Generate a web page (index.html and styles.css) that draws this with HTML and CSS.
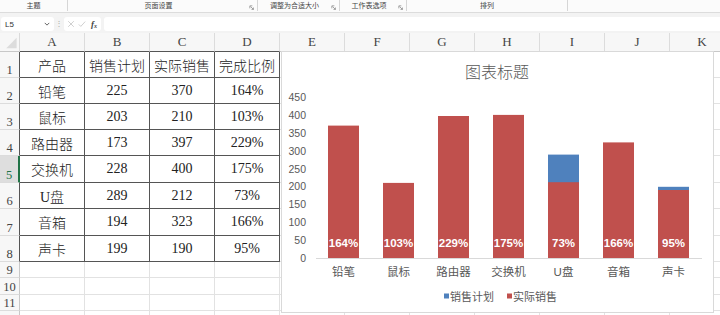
FILE: index.html
```html
<!DOCTYPE html>
<html lang="zh">
<head>
<meta charset="utf-8">
<title>Excel</title>
<link rel="stylesheet" href="styles.css">
</head>
<body>
<div class="app">
  <div class="ribbon">
    <div class="grp g1"><span class="lbl">主题</span></div>
    <div class="grp g2"><span class="lbl">页面设置</span><svg class="launch" viewBox="0 0 6 6"><path d="M1 4V1h3M2 2l3.3 3.3M5.3 3v2.3H3"/></svg></div>
    <div class="grp g3"><span class="lbl">调整为合适大小</span><svg class="launch" viewBox="0 0 6 6"><path d="M1 4V1h3M2 2l3.3 3.3M5.3 3v2.3H3"/></svg></div>
    <div class="grp g4"><span class="lbl">工作表选项</span><svg class="launch" viewBox="0 0 6 6"><path d="M1 4V1h3M2 2l3.3 3.3M5.3 3v2.3H3"/></svg></div>
    <div class="grp g5"><span class="lbl">排列</span></div>
    <div class="grp g6"></div>
  </div>
  <div class="fbar">
    <div class="namebox"><span>L5</span><svg class="chev" viewBox="0 0 8 5"><path d="M1 1l3 3 3-3"/></svg></div>
    <div class="dots">⋮</div>
    <div class="fxbox">
      <svg class="ico" viewBox="0 0 10 10"><path d="M1.5 1.5l7 7M8.5 1.5l-7 7"/></svg>
      <svg class="ico" viewBox="0 0 10 10"><path d="M1 5.5l2.5 2.5L9 2"/></svg>
      <span class="fx">f<sub>x</sub></span>
    </div>
    <div class="finput"></div>
  </div>
  <div class="sheet">
    <div class="row hdr">
      <div class="corner"><svg viewBox="0 0 20 19"><path d="M6 16H17V5z"/></svg></div>
      <div class="ch tb">A</div><div class="ch tb">B</div><div class="ch tb">C</div><div class="ch tb">D</div>
      <div class="ch">E</div><div class="ch">F</div><div class="ch">G</div><div class="ch">H</div><div class="ch">I</div><div class="ch">J</div><div class="ch">K</div>
    </div>
    <div class="row r26">
      <div class="rh tb">1</div>
      <div class="c t">产品</div><div class="c t">销售计划</div><div class="c t">实际销售</div><div class="c t">完成比例</div>
      <div class="c"></div><div class="c"></div><div class="c"></div><div class="c"></div><div class="c"></div><div class="c"></div><div class="c"></div>
    </div>
    <div class="row r26">
      <div class="rh tb">2</div>
      <div class="c t">铅笔</div><div class="c t">225</div><div class="c t">370</div><div class="c t">164%</div>
      <div class="c"></div><div class="c"></div><div class="c"></div><div class="c"></div><div class="c"></div><div class="c"></div><div class="c"></div>
    </div>
    <div class="row r26">
      <div class="rh tb">3</div>
      <div class="c t">鼠标</div><div class="c t">203</div><div class="c t">210</div><div class="c t">103%</div>
      <div class="c"></div><div class="c"></div><div class="c"></div><div class="c"></div><div class="c"></div><div class="c"></div><div class="c"></div>
    </div>
    <div class="row r26">
      <div class="rh tb">4</div>
      <div class="c t">路由器</div><div class="c t">173</div><div class="c t">397</div><div class="c t">229%</div>
      <div class="c"></div><div class="c"></div><div class="c"></div><div class="c"></div><div class="c"></div><div class="c"></div><div class="c"></div>
    </div>
    <div class="row r27">
      <div class="rh tb sel">5</div>
      <div class="c t">交换机</div><div class="c t">228</div><div class="c t">400</div><div class="c t">175%</div>
      <div class="c"></div><div class="c"></div><div class="c"></div><div class="c"></div><div class="c"></div><div class="c"></div><div class="c"></div>
    </div>
    <div class="row r26">
      <div class="rh tb">6</div>
      <div class="c t">U盘</div><div class="c t">289</div><div class="c t">212</div><div class="c t">73%</div>
      <div class="c"></div><div class="c"></div><div class="c"></div><div class="c"></div><div class="c"></div><div class="c"></div><div class="c"></div>
    </div>
    <div class="row r27">
      <div class="rh tb">7</div>
      <div class="c t">音箱</div><div class="c t">194</div><div class="c t">323</div><div class="c t">166%</div>
      <div class="c"></div><div class="c"></div><div class="c"></div><div class="c"></div><div class="c"></div><div class="c"></div><div class="c"></div>
    </div>
    <div class="row r26">
      <div class="rh tb">8</div>
      <div class="c t">声卡</div><div class="c t">199</div><div class="c t">190</div><div class="c t">95%</div>
      <div class="c"></div><div class="c"></div><div class="c"></div><div class="c"></div><div class="c"></div><div class="c"></div><div class="c"></div>
    </div>
    <div class="row r16">
      <div class="rh">9</div>
      <div class="c"></div><div class="c"></div><div class="c"></div><div class="c"></div><div class="c"></div><div class="c"></div><div class="c"></div><div class="c"></div><div class="c"></div><div class="c"></div><div class="c"></div>
    </div>
    <div class="row r17">
      <div class="rh">10</div>
      <div class="c"></div><div class="c"></div><div class="c"></div><div class="c"></div><div class="c"></div><div class="c"></div><div class="c"></div><div class="c"></div><div class="c"></div><div class="c"></div><div class="c"></div>
    </div>
    <div class="row r16">
      <div class="rh">11</div>
      <div class="c"></div><div class="c"></div><div class="c"></div><div class="c"></div><div class="c"></div><div class="c"></div><div class="c"></div><div class="c"></div><div class="c"></div><div class="c"></div><div class="c"></div>
    </div>
    <div class="row r16">
      <div class="rh"></div>
      <div class="c"></div><div class="c"></div><div class="c"></div><div class="c"></div><div class="c"></div><div class="c"></div><div class="c"></div><div class="c"></div><div class="c"></div><div class="c"></div><div class="c"></div>
    </div>

    <div class="chart">
      <svg width="433" height="262" viewBox="0 0 433 262">
        <text class="title" x="216" y="21">图表标题</text>
        <g class="ylab">
          <text x="25" y="46">450</text>
          <text x="25" y="64">400</text>
          <text x="25" y="82">350</text>
          <text x="25" y="100">300</text>
          <text x="25" y="118">250</text>
          <text x="25" y="135">200</text>
          <text x="25" y="153">150</text>
          <text x="25" y="171">100</text>
          <text x="25" y="189">50</text>
          <text x="25" y="207">0</text>
        </g>
        <line class="axis" x1="35" y1="207.5" x2="421" y2="207.5"/>
        <g class="plan">
          <rect x="47" y="126.5" width="31" height="80.5"/>
          <rect x="102" y="134.4" width="31" height="72.6"/>
          <rect x="157" y="145.1" width="31" height="61.9"/>
          <rect x="212" y="125.4" width="31" height="81.6"/>
          <rect x="267" y="103.6" width="31" height="103.4"/>
          <rect x="322" y="137.6" width="31" height="69.4"/>
          <rect x="377" y="135.8" width="31" height="71.2"/>
        </g>
        <g class="act">
          <rect x="47" y="74.6" width="31" height="132.4"/>
          <rect x="102" y="131.9" width="31" height="75.1"/>
          <rect x="157" y="65" width="31" height="142"/>
          <rect x="212" y="63.9" width="31" height="143.1"/>
          <rect x="267" y="131.2" width="31" height="75.8"/>
          <rect x="322" y="91.4" width="31" height="115.6"/>
          <rect x="377" y="139" width="31" height="68"/>
        </g>
        <g class="pct">
          <text x="62.5" y="192">164%</text>
          <text x="117.5" y="192">103%</text>
          <text x="172.5" y="192">229%</text>
          <text x="227.5" y="192">175%</text>
          <text x="282.5" y="192">73%</text>
          <text x="337.5" y="192">166%</text>
          <text x="392.5" y="192">95%</text>
        </g>
        <g class="cat">
          <text x="62.5" y="221">铅笔</text>
          <text x="117.5" y="221">鼠标</text>
          <text x="172.5" y="221">路由器</text>
          <text x="227.5" y="221">交换机</text>
          <text x="282.5" y="221">U盘</text>
          <text x="337.5" y="221">音箱</text>
          <text x="392.5" y="221">声卡</text>
        </g>
        <g class="legend">
          <rect class="sw-plan" x="163" y="242.5" width="5" height="5"/>
          <text x="169" y="245.5">销售计划</text>
          <rect class="sw-act" x="226" y="242.5" width="5" height="5"/>
          <text x="232" y="245.5">实际销售</text>
        </g>
      </svg>
    </div>
  </div>
</div>
</body>
</html>
```

FILE: styles.css
```css
* { box-sizing: border-box; }
html, body { margin: 0; padding: 0; }
body {
  width: 720px;
  height: 315px;
  overflow: hidden;
  background: #fff;
  font-family: "Liberation Sans", "Noto Sans CJK SC", sans-serif;
}
.app { width: 720px; height: 315px; overflow: hidden; display: flex; flex-direction: column; }

/* ribbon group labels */
.ribbon {
  height: 13px;
  flex: none;
  display: flex;
  background: #fbfbfb;
  border-bottom: 1px solid #dcdcdc;
}
.grp {
  height: 11px;
  display: flex;
  align-items: center;
  border-right: 1px solid #d6d6d6;
  flex: none;
}
.g1 { width: 68px; }
.g2 { width: 190px; }
.g3 { width: 82px; }
.g4 { width: 67px; }
.g5 { width: 161px; }
.g6 { flex: 1; border-right: none; }
.lbl {
  flex: 1;
  text-align: center;
  font-size: 7px;
  line-height: 11px;
  color: #444;
  font-family: "Noto Sans CJK SC", sans-serif;
}
.launch {
  width: 5px; height: 5px;
  margin-right: 3px;
  margin-top: 3px;
  flex: none;
}
.launch path { fill: none; stroke: #777; stroke-width: 0.8; }

/* formula bar */
.fbar {
  height: 20px;
  flex: none;
  display: flex;
  align-items: center;
  background: #f3f3f3;
  padding: 2px 0 0 1px;
}
.namebox {
  width: 53px; height: 14px;
  background: #fff;
  border-radius: 3px;
  display: flex; align-items: center;
  padding: 0 4px;
  font-size: 8px; color: #333;
}
.namebox span { flex: 1; }
.chev { width: 6px; height: 4px; }
.chev path { fill: none; stroke: #555; stroke-width: 1.2; }
.dots { width: 10px; text-align: center; font-size: 8px; color: #aaa; line-height: 14px; }
.fxbox {
  width: 37px; height: 14px;
  background: #fff;
  border-radius: 3px;
  display: flex; align-items: center;
  gap: 3px;
  padding-left: 3px;
}
.ico { width: 8px; height: 8px; }
.ico path { fill: none; stroke: #c4c4c4; stroke-width: 1; }
.fx { font-family: "Liberation Serif", serif; font-style: italic; font-weight: bold; font-size: 9px; color: #444; margin-left: 2px; }
.fx sub { font-size: 6px; vertical-align: -1px; }
.finput {
  flex: 1; height: 14px;
  margin-left: 3px;
  background: #fff;
  border-radius: 3px 0 0 3px;
}

/* sheet */
.sheet {
  flex: 1;
  position: relative;
  overflow: hidden;
  background: #fff;
  font-family: "Liberation Serif", "Noto Sans CJK SC", serif;
}
.row { display: flex; flex: none; }
.hdr { height: 19px; }
.r26 { height: 26px; }
.r27 { height: 27px; }
.r16 { height: 16px; }
.r17 { height: 17px; }

.corner {
  width: 20px; flex: none;
  background: #f7f7f7;
  border-right: 1px solid #dadada;
  border-bottom: 1px solid #c8c8c8;
}
.corner svg { width: 20px; height: 18px; display: block; }
.corner path { fill: #dcdcdc; }
.ch {
  width: 65px; flex: none;
  background: #f7f7f7;
  border-right: 1px solid #dcdcdc;
  border-bottom: 1px solid #c8c8c8;
  display: flex; align-items: center; justify-content: center;
  font-size: 13px; color: #444;
}
.ch.tb { border-bottom-color: #555; }
.rh {
  width: 20px; flex: none;
  background: #f7f7f7;
  border-right: 1px solid #c8c8c8;
  border-bottom: 1px solid #dcdcdc;
  display: flex; align-items: flex-end; justify-content: center;
  font-size: 12.5px; line-height: 1; color: #444;
  padding-bottom: 1px;
}
.rh.tb { border-right-color: #555; }
.rh.sel {
  background: #dedede;
  color: #217346;
  border-right: 2px solid #217346;
}
.c {
  width: 65px; flex: none;
  border-right: 1px solid #e2e2e2;
  border-bottom: 1px solid #e2e2e2;
}
.c.t {
  border-right-color: #555;
  border-bottom-color: #555;
  display: flex; align-items: center; justify-content: center;
  font-size: 14px; color: #222;
  font-weight: 300;
}

/* chart */
.chart {
  position: absolute;
  left: 281px;
  top: 18px;
  width: 433px;
  height: 262px;
  background: #fff;
  border: 1px solid #d9d9d9;
}
.chart svg { display: block; position: absolute; left: -1px; top: -1px; }
.chart text { font-family: "Liberation Sans", "Noto Sans CJK SC", sans-serif; dominant-baseline: central; }
.title { font-size: 16px; fill: #595959; text-anchor: middle; font-family: "Noto Sans CJK SC", sans-serif; font-weight: 300; }
.ylab text { font-size: 10.5px; fill: #595959; text-anchor: end; }
.axis { stroke: #d9d9d9; stroke-width: 1; }
.plan rect, .sw-plan { fill: #4f81bd; }
.act rect, .sw-act { fill: #c0504d; }
.pct text { font-size: 11.5px; font-weight: bold; fill: #fff; text-anchor: middle; }
.cat text { font-size: 11.5px; fill: #595959; text-anchor: middle; }
.legend text { font-size: 11px; fill: #595959; }
```
